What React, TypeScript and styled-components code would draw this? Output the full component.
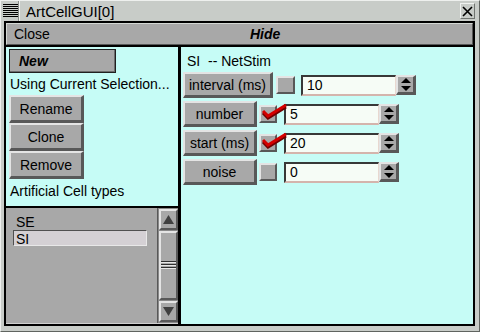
import React from 'react';
import styled, { createGlobalStyle } from 'styled-components';

const GlobalStyle = createGlobalStyle`
  html, body { margin: 0; padding: 0; background: #c8ccc8; }
  body {
    font-family: "Liberation Sans", Arial, sans-serif;
    font-size: 14px;
    color: #000;
  }
`;

const CYAN = '#c6fcf6';
const GREY = '#a8a8a8';

const Window = styled.div`
  width: 480px;
  height: 332px;
  box-sizing: border-box;
  background: #c8ccc8;
  display: flex;
  flex-direction: column;
  border-top: 1px solid #eef0ee;
  border-left: 1px solid #eef0ee;
  border-right: 1px solid #606460;
  border-bottom: 1px solid #606460;
`;

const TitleBar = styled.div`
  height: 20px;
  flex: none;
  display: flex;
  align-items: center;
`;

const MenuGlyph = styled.div`
  width: 19px;
  height: 20px;
  box-sizing: border-box;
  border-right: 1px solid #f0f2f0;
  box-shadow: inset -1px 0 #888c88;
  display: flex;
  align-items: center;
  justify-content: center;

  &::before {
    content: "";
    width: 15px;
    height: 14px;
    background: repeating-linear-gradient(to bottom, #000 0 1px, transparent 1px 2px);
  }
`;

const Title = styled.div`
  padding-left: 6px;
  font-size: 15px;
  line-height: 21px;
`;

const CloseBox = styled.div`
  margin-left: auto;
  margin-right: 4px;
  width: 15px;
  height: 16px;
  box-sizing: border-box;
  border-top: 1px solid #f0f2f0;
  border-left: 1px solid #f0f2f0;
  border-right: 1px solid #707470;
  border-bottom: 1px solid #707470;
  display: flex;
  align-items: center;
  justify-content: center;
`;

const Frame = styled.div`
  flex: 1;
  min-height: 0;
  padding: 0 4px 5px 3px;
  display: flex;
`;

const Inner = styled.div`
  flex: 1;
  border: 2px solid #000;
  background: #000;
  display: flex;
  flex-direction: column;
  gap: 2px;
`;

const MenuBar = styled.div`
  height: 22px;
  flex: none;
  box-sizing: border-box;
  background: ${GREY};
  border-top: 1px solid #d4d8d4;
  border-left: 1px solid #d4d8d4;
  border-bottom: 1px solid #585858;
  border-right: 1px solid #585858;
  display: flex;
  align-items: center;
`;

const MenuItem = styled.div<{ $w?: number; $strong?: boolean }>`
  width: ${(p) => (p.$w ? `${p.$w}px` : 'auto')};
  padding-left: 7px;
  box-sizing: border-box;
  font-weight: ${(p) => (p.$strong ? 'bold' : 'normal')};
  font-style: ${(p) => (p.$strong ? 'italic' : 'normal')};
`;

const Content = styled.div`
  flex: 1;
  min-height: 0;
  display: flex;
  gap: 3px;
`;

const LeftCol = styled.div`
  width: 172px;
  display: flex;
  flex-direction: column;
  gap: 2px;
`;

const TopPane = styled.div`
  height: 159px;
  flex: none;
  background: ${CYAN};
  padding: 2px 0 0 3px;
  box-sizing: border-box;
  display: flex;
  flex-direction: column;
  align-items: flex-start;
`;

const FlatButton = styled.div`
  width: 107px;
  height: 24px;
  box-sizing: border-box;
  background: ${GREY};
  border: 1px solid #202020;
  box-shadow: inset -1px -1px #6c6c6c;
  padding-left: 9px;
  line-height: 22px;
  font-weight: bold;
  font-style: italic;
`;

const Note = styled.div<{ $h: number }>`
  height: ${(p) => p.$h}px;
  line-height: ${(p) => p.$h}px;
  padding-left: 1px;
  white-space: nowrap;
`;

const Raised = styled.div<{ $w: number; $h: number }>`
  width: ${(p) => p.$w}px;
  height: ${(p) => p.$h}px;
  flex: none;
  box-sizing: border-box;
  background: ${GREY};
  border-style: solid;
  border-width: 2px 3px 3px 2px;
  border-color: #e4e4e4 #585858 #585858 #e4e4e4;
  display: flex;
  align-items: center;
  justify-content: center;
  white-space: nowrap;
`;

const ListPane = styled.div`
  flex: 1;
  min-height: 0;
  background: ${GREY};
  display: flex;
  border-bottom: 1px solid #d0d0d0;
`;

const ListBody = styled.div`
  flex: 1;
  padding: 5px 0 0 7px;
  display: flex;
  flex-direction: column;
  gap: 1px;
`;

const ListRow = styled.div<{ $selected?: boolean }>`
  width: 134px;
  height: 16px;
  box-sizing: border-box;
  line-height: 16px;
  padding-left: 2px;
  border: 1px solid ${(p) => (p.$selected ? '#505050' : 'transparent')};
  border-right-color: ${(p) => (p.$selected ? '#e8e8e8' : 'transparent')};
  border-bottom-color: ${(p) => (p.$selected ? '#e8e8e8' : 'transparent')};
  background: ${(p) => (p.$selected ? '#d4d0d4' : 'transparent')};
`;

const ScrollBar = styled.div`
  width: 21px;
  box-sizing: border-box;
  border-left: 1px solid #585858;
  background: #888888;
  padding: 1px 0 1px 1px;
  display: flex;
  flex-direction: column;
  gap: 1px;
`;

const ScrollBtn = styled.div<{ $grow?: boolean }>`
  height: ${(p) => (p.$grow ? 'auto' : '21px')};
  flex: ${(p) => (p.$grow ? 1 : 'none')};
  box-sizing: border-box;
  background: ${GREY};
  border-style: solid;
  border-width: 2px;
  border-color: #e4e4e4 #585858 #585858 #e4e4e4;
  display: flex;
  align-items: center;
  justify-content: center;
`;

const Grip = styled.div`
  width: 100%;
  height: 9px;
  background: repeating-linear-gradient(to bottom, #303030 0 1px, #e8e8e8 1px 2px, transparent 2px 3px);
`;

const RightPane = styled.div`
  flex: 1;
  background: ${CYAN};
  padding-left: 2px;
  display: flex;
  flex-direction: column;
  gap: 3px;
`;

const Header = styled.div`
  height: 22px;
  line-height: 28px;
  padding-left: 4px;
  white-space: pre;
`;

const Row = styled.div`
  height: 26px;
  display: flex;
  align-items: center;
`;

const CheckWrap = styled.div<{ $ml: number; $w: number }>`
  position: relative;
  margin-left: ${(p) => p.$ml}px;
  width: ${(p) => p.$w}px;
  height: 18px;
  flex: none;
  box-sizing: border-box;
  background: ${GREY};
  border-style: solid;
  border-width: 2px;
  border-color: #e4e4e4 #585858 #585858 #e4e4e4;
`;

const Tick = styled.svg`
  position: absolute;
  left: -1px;
  top: -3px;
  overflow: visible;
`;

const Field = styled.div<{ $ml: number }>`
  margin-left: ${(p) => p.$ml}px;
  width: 95px;
  height: 21px;
  flex: none;
  box-sizing: border-box;
  background: #f6fcf6;
  border-style: solid;
  border-width: 2px 1px 2px 2px;
  border-color: #383838 #e8d8d0 #d4b4ac #383838;
  padding-left: 4px;
  line-height: 17px;
`;

const UpDown = () => (
  <svg width="10" height="13" viewBox="0 0 10 13">
    <polygon points="5,0 10,5 0,5" fill="#000" />
    <polygon points="0,8 10,8 5,13" fill="#000" />
  </svg>
);

type ParamProps = {
  label: string;
  value: string;
  labelWidth: number;
  checkGap: number;
  checkWidth: number;
  fieldGap: number;
  checked?: boolean;
};

const ParamRow = ({ label, value, labelWidth, checkGap, checkWidth, fieldGap, checked }: ParamProps) => (
  <Row>
    <Raised $w={labelWidth} $h={26}>{label}</Raised>
    <CheckWrap $ml={checkGap} $w={checkWidth}>
      {checked && (
        <Tick width="27" height="15" viewBox="0 0 27 15">
          <polyline points="3,8 8,13 26,2" fill="none" stroke="#700000" strokeWidth="3" transform="translate(0,1)" />
          <polyline points="3,7 8,12 26,1" fill="none" stroke="#d40000" strokeWidth="3" />
        </Tick>
      )}
    </CheckWrap>
    <Field $ml={fieldGap}>{value}</Field>
    <Raised $w={20} $h={20}>
      <UpDown />
    </Raised>
  </Row>
);

const params = [
  { label: 'interval (ms)', value: '10', labelWidth: 90, checkGap: 3, checkWidth: 19, fieldGap: 6, checked: false },
  { label: 'number', value: '5', labelWidth: 74, checkGap: 2, checkWidth: 18, fieldGap: 7, checked: true },
  { label: 'start (ms)', value: '20', labelWidth: 74, checkGap: 2, checkWidth: 18, fieldGap: 7, checked: true },
  { label: 'noise', value: '0', labelWidth: 74, checkGap: 2, checkWidth: 18, fieldGap: 7, checked: false },
];

export default function App() {
  return (
    <>
      <GlobalStyle />
      <Window>
        <TitleBar>
          <MenuGlyph />
          <Title>ArtCellGUI[0]</Title>
          <CloseBox>
            <svg width="11" height="11" viewBox="0 0 11 11">
              <path d="M1 1 L10 10 M10 1 L1 10" stroke="#000" strokeWidth="1.6" />
            </svg>
          </CloseBox>
        </TitleBar>
        <Frame>
          <Inner>
            <MenuBar>
              <MenuItem $w={236}>Close</MenuItem>
              <MenuItem $strong>Hide</MenuItem>
            </MenuBar>
            <Content>
              <LeftCol>
                <TopPane>
                  <FlatButton>New</FlatButton>
                  <Note $h={22}>Using Current Selection...</Note>
                  <Raised $w={75} $h={28}>Rename</Raised>
                  <Raised $w={75} $h={28}>Clone</Raised>
                  <Raised $w={75} $h={28}>Remove</Raised>
                  <Note $h={25}>Artificial Cell types</Note>
                </TopPane>
                <ListPane>
                  <ListBody>
                    <ListRow>SE</ListRow>
                    <ListRow $selected>SI</ListRow>
                  </ListBody>
                  <ScrollBar>
                    <ScrollBtn>
                      <svg width="11" height="9" viewBox="0 0 11 9">
                        <polygon points="5.5,0 11,9 0,9" fill="#404040" />
                      </svg>
                    </ScrollBtn>
                    <ScrollBtn $grow>
                      <Grip />
                    </ScrollBtn>
                    <ScrollBtn>
                      <svg width="11" height="9" viewBox="0 0 11 9">
                        <polygon points="0,0 11,0 5.5,9" fill="#404040" />
                      </svg>
                    </ScrollBtn>
                  </ScrollBar>
                </ListPane>
              </LeftCol>
              <RightPane>
                <Header>SI  -- NetStim</Header>
                {params.map((p) => (
                  <ParamRow key={p.label} {...p} />
                ))}
              </RightPane>
            </Content>
          </Inner>
        </Frame>
      </Window>
    </>
  );
}
